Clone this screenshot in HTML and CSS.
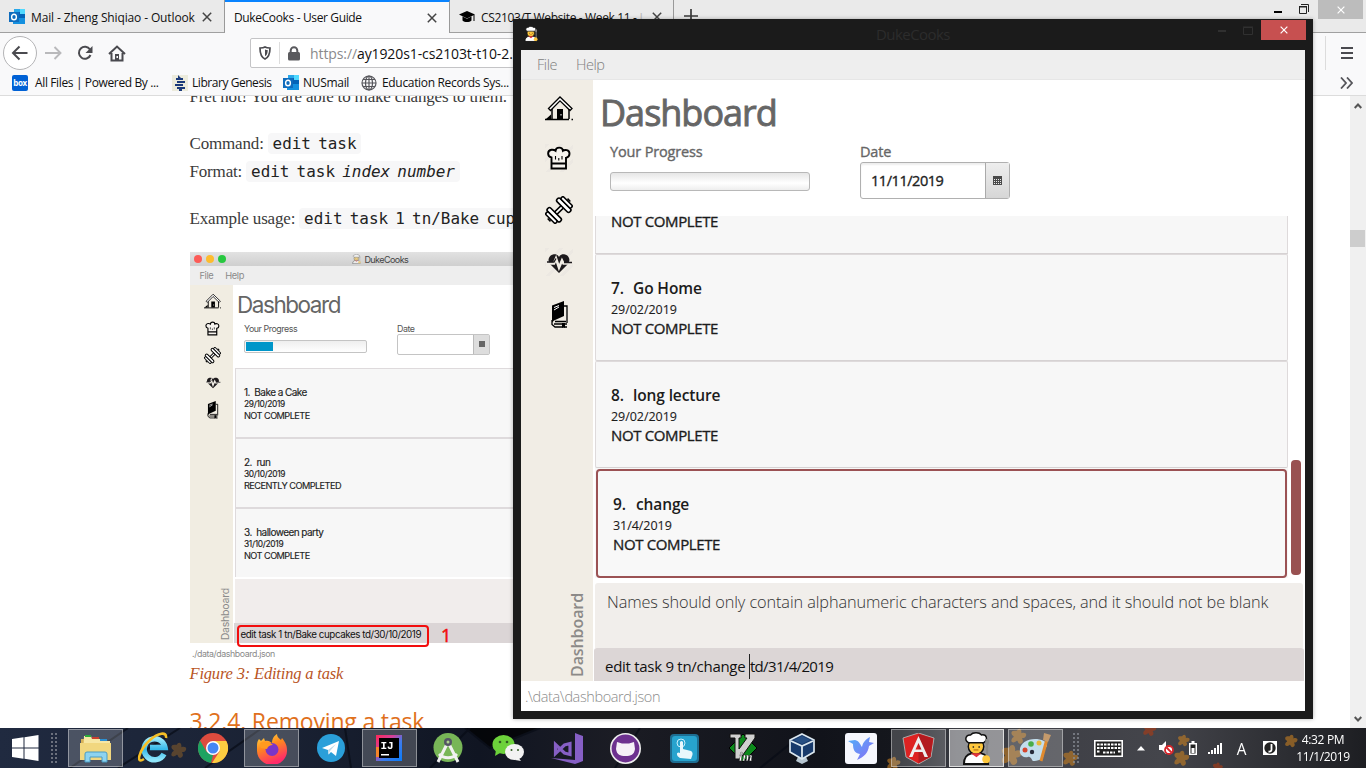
FILE: index.html
```html
<!DOCTYPE html>
<html lang="en">
<head>
<meta charset="utf-8">
<title>DukeCooks - User Guide</title>
<link rel="stylesheet" href="styles.css">
</head>
<body>
<svg class="defs" width="0" height="0">
  <defs>
    <linearGradient id="gCyan" x1="0" y1="0" x2="0" y2="1"><stop offset="0" stop-color="#9be9fb"/><stop offset=".5" stop-color="#35b8ea"/><stop offset="1" stop-color="#8fe6fb"/></linearGradient>
    <linearGradient id="gFox" x1="0" y1="0" x2=".4" y2="1"><stop offset="0" stop-color="#ffe14a"/><stop offset=".45" stop-color="#ff8a1e"/><stop offset="1" stop-color="#ff2a6a"/></linearGradient>
    <linearGradient id="gBird" x1="0" y1="0" x2="1" y2="1"><stop offset="0" stop-color="#4fb0f8"/><stop offset="1" stop-color="#8a6bf5"/></linearGradient>
    <linearGradient id="gIj" x1="0" y1="0" x2="1" y2="1"><stop offset="0" stop-color="#fe2857"/><stop offset=".35" stop-color="#d4409a"/><stop offset=".6" stop-color="#3f7bea"/><stop offset="1" stop-color="#087cfa"/></linearGradient>
    <symbol id="outlook" viewBox="0 0 16 16"><path fill="#28a8ea" d="M5 0h11v14H5z"/><path fill="#0a5fb4" d="M5 3h6v7H5z"/><path fill="#50d9ff" d="M11 0h5v5h-5z"/><path fill="#0364b8" d="M11 5h5v4h-5z"/><path fill="#1490df" d="M4 9l12 0v6H4z"/><path fill="#0f6cbd" d="M0 3h10v10H0z"/><ellipse cx="5" cy="8" rx="2.4" ry="2.8" fill="none" stroke="#fff" stroke-width="1.4"/></symbol>
    <symbol id="x" viewBox="0 0 10 10"><path d="M.8.8l8.4 8.4M9.2.8L.8 9.2" fill="none" stroke="currentColor" stroke-width="1.5"/></symbol>
    <symbol id="house" viewBox="0 0 28 28"><path d="M3.500 13.500L15 2l12 11.500-2 2L15 5.800 5.500 15.500z" fill="#fff" stroke="#000" stroke-width="1.300"/><path d="M7 14v10M24 14v10M0 24.500h24M26.500 24.500h1.500" stroke="#000" stroke-width="1.500"/><path d="M12 14h6v10h-6zM1 24l5-4.500V24z"/><path d="M15.500 19h1v1.500h-1z" fill="#fff"/></symbol>
    <symbol id="hat" viewBox="0 0 28 28"><path d="M6.500 18.500v-5C2 12.500 2 6.500 6.500 5.800c2-.3 3 .2 4 1C11 2.500 17.500 2.500 18 6.800c1.500-1.200 6.500-1.500 6.500 3 0 2.500-1.500 3.500-3.500 4v10.700H6.500zM6.500 19.500H21" fill="#f6f3ee" stroke="#000" stroke-width="1.900"/><path d="M10.500 12v3.500M17 12v3.500M13.800 14v2.500" stroke="#000" stroke-width="1.100"/></symbol>
    <symbol id="dumb" viewBox="0 0 28 28"><g fill="#fff" stroke="#000" stroke-width="1.600" transform="rotate(-45 14 14)"><path d="M9 12.300h10v3.400H9z"/><rect x="5" y="5" width="4.500" height="18" rx="2"/><rect x="18.500" y="5" width="4.500" height="18" rx="2"/><rect x="1.500" y="7" width="3.500" height="14" rx="1.500"/><rect x="23" y="7" width="3.500" height="14" rx="1.500"/><path d="M0 12v4M28 12v4"/></g></symbol>
    <symbol id="heart" viewBox="0 0 28 28"><path fill="#1d1a1c" d="M14 25L5 16C2 12 4 7.500 8 6.500c3-.5 5 .5 6 2.500 1-2 3-3 6-2.500 4 1 6 5.500 3 9.500z"/><path fill="none" stroke="#f1ede5" stroke-width="2.600" d="M1 15.500h8l2-5 3 9 3-7 1.500 3H27"/><path fill="none" stroke="#1d1a1c" stroke-width="1.300" d="M2 14h7l2-3.500M19 14.500h8"/></symbol>
    <symbol id="book" viewBox="0 0 20 28"><path d="M3 5.500L15 1v15L5 20.500l-2 2z" fill="#000"/><path d="M15 6h3v17M3 20v4.500L6 27h12M6 21.500h11M5 24h13" fill="none" stroke="#000" stroke-width="1.300"/><path d="M5 7.500l5-2M5 10l5-3" stroke="#fff" stroke-width="1"/><path d="M13 23h3v5l-1.500-1.300L13 28z"/></symbol>
    <symbol id="chef" viewBox="0 0 30 34"><path d="M2 33c0-7 3-10 8-11h10c5 1 7 4 7 11z" fill="#fff" stroke="#111" stroke-width="2"/><circle cx="14.500" cy="15" r="8" fill="#ffc83d" stroke="#111" stroke-width="1.500"/><path d="M6.500 11C2 8 4 2.500 9 3c2-3 9-3 11 0 6-1 7 5 2.500 8z" fill="#fff" stroke="#111" stroke-width="1.500"/><path d="M9 22h11l-5 4z" fill="#e3343c"/><path d="M11 15.500h1.500M17 15.500h1.500" stroke="#222" stroke-width="1.500"/><path d="M12 18.500h5" stroke="#a65e00"/><path d="M26 10v19" stroke="#888" stroke-width="2"/><ellipse cx="26" cy="10" rx="2" ry="3" fill="#888"/><circle cx="25" cy="28" r="4" fill="#ffc83d"/></symbol>
    <symbol id="leaf" viewBox="0 0 24 24"><path d="M10 2c4-3 6 2 5 5 5-2 8 1 6 4-1 3-5 2-5 3 3 4 0 7-3 7-3-1-2-4-4-4-4 4-8 2-7-1 0-3 3-3 3-5-4-2-4-6-1-7 4-1 5 1 6-2z"/></symbol>
  </defs>
</svg>

<main class="browser">
  <header class="tabs">
    <div class="tab tab-a"><svg width="16" height="16"><use href="#outlook"/></svg><span class="tab-t1">Mail - Zheng Shiqiao - Outlook</span><svg class="tab-x" width="10" height="10"><use href="#x"/></svg></div>
    <div class="tab tab-b"><span class="tab-t2">DukeCooks - User Guide</span><svg class="tab-x" width="10" height="10"><use href="#x"/></svg></div>
    <div class="tab tab-c"><svg width="16" height="14" viewBox="0 0 16 14"><path d="M0 4.500L8 1l8 3.500-8 4z"/><path d="M3.500 6.500v4c2 2 7 2 9 0v-4L8 8.800z"/><path d="M15 5v6" stroke="#000"/></svg><span class="tab-t3">CS2103/T Website - Week 11 - <i>L</i></span><svg class="tab-x" width="10" height="10"><use href="#x"/></svg></div>
    <svg class="plus" width="14" height="14" viewBox="0 0 14 14"><path d="M7 0v14M0 7h14" stroke="#3a3a3a" stroke-width="1.700"/></svg>
    <div class="win-btns"><svg width="8" height="14"><path d="M0 9h8v2H0z"/></svg><svg width="10" height="10" viewBox="0 0 10 10"><path d="M.5 3h7v6.500h-7zM0 2.500h8M2 .5h7.500V8" fill="none" stroke="#222"/></svg><span class="dim-close"><svg width="8" height="8" viewBox="0 0 10 10"><use href="#x"/></svg></span></div>
  </header>
  <nav class="nav">
    <span class="back"><svg width="18" height="16" viewBox="0 0 18 16"><path d="M16.500 8H2M8.500 1.500L2 8l6.500 6.500" fill="none" stroke="#4a4a4f" stroke-width="2"/></svg></span>
    <svg class="fwd" width="17" height="14" viewBox="0 0 17 14"><path d="M0 7h15M9.500 1L15.500 7l-6 6" fill="none" stroke="#b9b9bb" stroke-width="1.900"/></svg>
    <svg class="reload" width="16" height="16" viewBox="0 0 16 16"><path d="M13 4.500A6 6 0 1 0 13.500 10" fill="none" stroke="#4a4a4f" stroke-width="2"/><path d="M15.500 1v7h-7z" fill="#4a4a4f"/></svg>
    <svg class="home" width="18" height="17" viewBox="0 0 18 17"><path d="M1 9l8-7.500L17 9M3.500 8v7.500h11V8" fill="none" stroke="#4a4a4f" stroke-width="2"/><path d="M7 9h4v6H7z" fill="#4a4a4f"/><path d="M8.500 11h1.500v2H8.500z" fill="#fff"/></svg>
    <div class="url"><svg width="12" height="14" viewBox="0 0 12 14"><path d="M6 1C4.500 2 2.500 2 1 2c0 5 .5 9 5 11C10.500 11 11 7 11 2 9.500 2 7.500 2 6 1z" fill="none" stroke="#4a4a4f" stroke-width="1.700"/><path d="M6 3.500c1 .5 2 .5 2.700.5 0 3-.5 5-2.700 6.200z" fill="#4a4a4f"/></svg><span class="url-sep"></span><svg width="12" height="15" viewBox="0 0 12 15"><rect y="6" width="12" height="8.500" rx="1.500" fill="#5a5a5e"/><path d="M2.700 7V4.500a3.300 3.300 0 0 1 6.600 0V7" fill="none" stroke="#5a5a5e" stroke-width="2"/></svg><span class="url-t"><i>https://</i>ay1920s1-cs2103t-t10-2.</span></div>
    <span class="nav-sep"></span>
    <svg width="12" height="12"><path d="M0 0h12v2H0zM0 5h12v2H0zM0 10h12v2H0z" fill="#4a4a4f"/></svg>
  </nav>
  <div class="marks">
    <span class="box">box</span><span class="bm b1">All Files | Powered By ...</span>
    <svg class="lg" width="16" height="16"><path fill="#ecebdc" d="M0 0h16v16H0z"/><path fill="#1b3a7a" d="M6 0l3 3-3 0zM4 3h7v2H4zM5 6h8v2H5zM3 9h8v2H3zM5 12h8v2H5zM7 14h3v2H7z"/></svg><span class="bm b2">Library Genesis</span>
    <svg width="16" height="16"><use href="#outlook"/></svg><span class="bm b3">NUSmail</span>
    <svg width="16" height="16" viewBox="0 0 16 16"><g fill="none" stroke="#55555a" stroke-width="1.200"><circle cx="8" cy="8" r="7"/><ellipse cx="8" cy="8" rx="3.500" ry="7"/><path d="M1 8h14M2 4.500h12M2 11.500h12M8 1v14"/></g></svg><span class="bm b4">Education Records Sys...</span>
    <svg class="more" width="13" height="12" viewBox="0 0 13 12"><path d="M1 .5L6 6l-5 5.500M7 .5L12 6l-5 5.500" fill="none" stroke="#55555a" stroke-width="1.800"/></svg>
  </div>
  <div class="view">
    <article class="doc">
      <p>Fret not! You are able to make changes to them.</p>
      <p>Command: <code>edit task</code><br>Format: <code>edit task <em>index number</em></code></p>
      <p>Example usage: <code>edit task 1 tn/Bake cupcakes</code></p>
      <figure class="shot">
        <div class="mac"><i class="r"></i><i class="y"></i><i class="g"></i><svg width="9" height="10"><use href="#chef"/></svg><span>DukeCooks</span></div>
        <div class="mac-menu"><span>File</span><span>Help</span></div>
        <div class="mac-body">
          <div class="mac-side"><svg width="17" height="17"><use href="#house"/></svg><svg width="17" height="17"><use href="#hat"/></svg><svg width="17" height="17"><use href="#dumb"/></svg><svg width="16" height="16"><use href="#heart"/></svg><svg width="13" height="19"><use href="#book"/></svg><b>Dashboard</b></div>
          <div class="mac-main">
            <h3>Dashboard</h3>
            <div class="mac-row"><div class="mac-prog">Your Progress<span><i></i></span></div><div class="mac-date">Date<span><i></i></span></div></div>
            <ul class="mac-list">
              <li><b>1.&nbsp; Bake a Cake</b><small>29/10/2019</small><span>NOT COMPLETE</span></li>
              <li><b>2.&nbsp; run</b><small>30/10/2019</small><span>RECENTLY COMPLETED</span></li>
              <li><b>3.&nbsp; halloween party</b><small>31/10/2019</small><span>NOT COMPLETE</span></li>
            </ul>
            <div class="mac-out"></div>
            <div class="mac-cmd"><span>edit task 1 tn/Bake cupcakes td/30/10/2019</span><b>1</b></div>
          </div>
        </div>
        <div class="mac-foot">./data/dashboard.json</div>
        <figcaption>Figure 3: Editing a task</figcaption>
      </figure>
      <h2>3.2.4. Removing a task</h2>
    </article>
    <div class="scroll"><svg width="8" height="6" viewBox="0 0 8 6"><path d="M.7 5L4 1.500 7.300 5" fill="none" stroke="#555" stroke-width="2"/></svg><i></i><svg class="dn" width="8" height="6" viewBox="0 0 8 6"><path d="M.7 1L4 4.500 7.300 1" fill="none" stroke="#555" stroke-width="2"/></svg></div>
  </div>
</main>

<section class="app">
  <header class="app-title"><svg width="14" height="16"><use href="#chef"/></svg><span>DukeCooks</span><div class="app-btns"><svg width="8" height="10"><path d="M0 5h8v2H0z" fill="#303030"/></svg><svg width="10" height="9"><path d="M.5 1.500h9v7h-9zM0 1h10" fill="none" stroke="#303030"/></svg><b><svg width="8" height="8"><use href="#x"/></svg></b></div></header>
  <div class="app-menu"><span>File</span><span>Help</span></div>
  <div class="app-body">
    <aside class="side"><svg class="first" width="28" height="28"><use href="#house"/></svg><svg class="hatch" width="28" height="28"><use href="#hat"/></svg><svg width="28" height="28"><use href="#dumb"/></svg><svg class="hatch" width="28" height="28"><use href="#heart"/></svg><svg width="20" height="28"><use href="#book"/></svg><b>Dashboard</b></aside>
    <div class="pane">
      <h1>Dashboard</h1>
      <div class="fields">
        <div class="prog"><label>Your Progress</label><span></span></div>
        <div class="date"><label>Date</label><div><span>11/11/2019</span><i><svg width="9" height="9"><path d="M0 0h9v9H0z" fill="#4a4a4a"/><path d="M1 3.500h7M1 5.500h7M1 7.500h7" stroke="#e8e8e8" stroke-dasharray="1 1"/></svg></i></div></div>
      </div>
      <div class="list">
        <ul class="cards">
          <li class="cut"><span>NOT COMPLETE</span></li>
          <li><b><u>7.</u><em>Go Home</em></b><small>29/02/2019</small><span>NOT COMPLETE</span></li>
          <li><b><u>8.</u><em>long lecture</em></b><small>29/02/2019</small><span>NOT COMPLETE</span></li>
          <li class="sel"><b><u>9.</u><em>change</em></b><small>31/4/2019</small><span>NOT COMPLETE</span></li>
        </ul>
        <div class="thumb"></div>
      </div>
      <div class="out">Names should only contain alphanumeric characters and spaces, and it should not be blank</div>
      <div class="cmd"><span>edit task 9 tn/change</span><i></i><span class="rest">td/31/4/2019</span></div>
    </div>
  </div>
  <footer class="app-foot">.\data\dashboard.json</footer>
</section>

<footer class="bar">
  <svg class="wall" width="1366" height="40" viewBox="0 0 1366 40">
    <g stroke="#080c16" stroke-width="2" opacity=".7"><path d="M70 40L128 0M118 40L180 0M205 40L262 0M345 0l6 40M430 40l40-40M465 0l25 20 50-20M640 0l-25 40M760 40l50-40"/></g>
    <g fill="#c77f22" opacity=".6"><use href="#leaf" x="170" y="14" width="18" height="18" opacity=".6"/><use href="#leaf" x="1000" y="16" width="24" height="24"/><use href="#leaf" x="1010" y="0" width="18" height="18"/><use href="#leaf" x="884" y="28" width="20" height="16"/><use href="#leaf" x="1062" y="22" width="18" height="18"/><use href="#leaf" x="1170" y="22" width="24" height="18"/><use href="#leaf" x="1177" y="6" width="14" height="14"/><use href="#leaf" x="1284" y="6" width="15" height="15"/></g>
    <g fill="#a63c18" opacity=".65"><use href="#leaf" x="1142" y="-6" width="16" height="16"/><use href="#leaf" x="1210" y="34" width="16" height="12"/></g>
  </svg>
  <div class="start"><svg width="27" height="26" viewBox="0 0 27 26" fill="#fff"><path d="M0 4l11.500-1.700v10.200H0zM12.500 2.200L26.500 0v12.500h-14zM0 13.500h11.500v10.300L0 22zM12.500 13.500h14V26l-14-2.200z"/></svg></div>
  <i class="grip"></i>
  <div class="tasks">
    <span class="on"><svg width="32" height="29" viewBox="0 0 32 29"><path d="M1 5h10l2 3h17v18H1z" fill="#d7b257"/><path d="M4 2h7l1 3h8l1 2h9v16H3z" fill="#f7e7a4"/><path d="M5 1h6v2H5z" fill="#2caa3c"/><path d="M12 3h7v2h-7z" fill="#c9402e"/><path d="M20 5h7v2h-7z" fill="#2e8fd0"/><path d="M0 9h31v17H0z" fill="#f1d77f"/><path d="M5 28V20q0-2 2-2h18q2 0 2 2v8h-5v-5H10v5z" fill="#8dd3f0" stroke="#4b9cc4"/></svg></span>
    <span><svg width="32" height="32" viewBox="0 0 32 32"><path d="M26 22a10.500 10.500 0 1 1 1-6.500H12" fill="none" stroke="url(#gCyan)" stroke-width="5.500"/><path d="M6 27C-3 33 1 18 12 8 20 1 29-1 28 6" fill="none" stroke="#f6bf26" stroke-width="2.600"/></svg></span>
    <span><svg width="30" height="30" viewBox="0 0 30 30"><circle cx="15" cy="15" r="15" fill="#dd4b3e"/><path d="M2 7.500L8.500 18.700 15 22l-2 8A15 15 0 0 1 2 7.500z" fill="#1da362"/><path d="M15 8h13.300A15 15 0 0 1 14 30l7.500-11.500z" fill="#fccd41"/><circle cx="15" cy="15" r="7" fill="#fff"/><circle cx="15" cy="15" r="5.500" fill="#4587f3"/></svg></span>
    <span class="on"><svg width="31" height="31" viewBox="0 0 31 31"><path d="M1 13C1 8 3 6 3 6l2 2 3-3 1 3c4-1 5 1 7 2 0-5 3-8 5-9 0 3 2 4 4 6l1-2c4 5 5 8 5 12A15 14.500 0 0 1 1 18z" fill="url(#gFox)"/><circle cx="16" cy="16.500" r="6.500" fill="#7a35c8"/><path d="M4 10c5-3 9-1 13 2-3 0-5 1-6 4l-6-1z" fill="#ff9a1f"/></svg></span>
    <span><svg width="28" height="28" viewBox="0 0 28 28"><circle cx="14" cy="14" r="14" fill="#2a9fd9"/><path d="M5 14L22 7l-3 15-5-4-2.500 2.500L11 16z" fill="#fff"/><path d="M11 16l8-6-6 7-1.500 3.500z" fill="#bcd9ea"/></svg></span>
    <span class="on"><svg width="26" height="26" viewBox="0 0 26 26"><path d="M0 0h26v26H0z" fill="url(#gIj)"/><path d="M0 12h5v10H0z" fill="#f58529"/><path d="M3 3h20v20H3z"/><text x="4.500" y="14" class="ij">IJ</text><path d="M5 19h8v1.500H5z" fill="#fff"/></svg></span>
    <span><svg width="30" height="30" viewBox="0 0 30 30"><circle cx="15" cy="14.500" r="14.500" fill="#78b657"/><path d="M14 11L5 29M16 11l9 18M6 21c5 5 13 5 18 0" fill="none" stroke="#f1f1f1" stroke-width="3"/><circle cx="15" cy="9" r="4" fill="#556"/><circle cx="15" cy="9" r="1.500" fill="#aed28f"/></svg></span>
    <span><svg width="32" height="26" viewBox="0 0 32 26"><ellipse cx="11.500" cy="9.500" rx="11" ry="9.500" fill="#6dd23b"/><path d="M4 15l-1 6 5-3z" fill="#6dd23b"/><ellipse cx="22.500" cy="17" rx="9.500" ry="8" fill="#f2f2f2"/><path d="M26 22l3 4-6-1z" fill="#f2f2f2"/><g fill="#315b22"><circle cx="8" cy="7" r="1.300"/><circle cx="15" cy="7" r="1.300"/><circle cx="19.500" cy="15" r="1"/><circle cx="26" cy="15" r="1"/></g></svg></span>
    <span><svg width="32" height="31" viewBox="0 0 32 31"><path d="M24 0l8 3v25l-8 3-24-6 24 2z" fill="#865fc5"/><path d="M4.500 11.500v9l9-8.500 5.500-1.500v11l-5.500-1.500-9-8.500z" fill="none" stroke="#865fc5" stroke-width="3.200"/></svg></span>
    <span><svg width="31" height="31" viewBox="0 0 31 31"><circle cx="15.500" cy="15.500" r="14.700" fill="#6d318f" stroke="#eee" stroke-width="1.600"/><path d="M7 9l5 1.500h7L24 9l1 7c-1 6-4 7-9.500 7S7 22 6 16z" fill="#f5f0f7"/></svg></span>
    <span><svg width="29" height="29" viewBox="0 0 29 29"><rect width="29" height="29" rx="4" fill="#1e6e92"/><rect x="2" y="2" width="25" height="25" rx="3" fill="#27a3ce"/><circle cx="11" cy="9" r="4" fill="none" stroke="#c9effb"/><path d="M10 24c-5-3-3-7 0-5V8q1.500-2 3 0v7l8 2c3 2 1 5 0 8z" fill="#e9f7fc"/></svg></span>
    <span><svg width="30" height="30" viewBox="0 0 30 30"><path d="M15 1l14 14-14 14L1 15z" fill="#0c8a1c" stroke="#000"/><path d="M2 1h11v4h-2v11L19 5h-2V1h10v4L12 26H7V5H2z" fill="#d0d0d0" stroke="#111"/><text x="11" y="28" class="vim">im</text></svg></span>
    <span class="vb"><svg width="26" height="31" viewBox="0 0 26 31"><path d="M10 22h6l3 6-6 3-6-3z" fill="#b8c7d2"/><path d="M13 1l12 6v12l-12 7L1 19V7z" fill="#183a6b" stroke="#dbe7ef" stroke-width="1.700"/><path d="M2 8l11 5 11-5M13 13v12" fill="none" stroke="#dbe7ef" stroke-width="1.800"/><path d="M13 3l8 4-8 4-8-4z" fill="#274f83"/></svg></span>
    <span><svg width="32" height="31" viewBox="0 0 32 31"><rect width="32" height="31" rx="3" fill="#f6f7fd"/><path d="M3 8l7-1c4 1 5 4 7 7 1-5 4-8 8-10l-1 5 5 1-5 3c-1 7-5 11-12 14l3-6c-6-1-7-5-7-10z" fill="url(#gBird)"/></svg></span>
    <span class="on"><svg width="33" height="31" viewBox="0 0 33 31"><path d="M16.500 0L32 5l-3 19-12.500 7L4 24 1 5z" fill="#d22" stroke="#aaa"/><path d="M16.500 1L31 5.500 28.500 24l-12 6z" fill="#b31a1f"/><path d="M16.500 3L26 24h-3.500l-2-5h-8l-2 5H7zM16.500 10l-3 6.500h6z" fill="#eee" fill-rule="evenodd"/></svg></span>
    <span class="on act"><svg width="29" height="33"><use href="#chef"/></svg></span>
    <span class="on"><svg width="33" height="32" viewBox="0 0 33 32"><path d="M1 21C-1 9 14 4 25 9c7 5-1 7 0 12 0 7-7 8-11 8-1 0-2-5-5-4-4 1-7-1-8-4z" fill="#c2ddec"/><circle cx="6" cy="18" r="2.500" fill="#d5462e"/><circle cx="12" cy="12" r="2.800" fill="#49ad49"/><circle cx="20" cy="11" r="2.500" fill="#e7b93a"/><circle cx="13" cy="20" r="2.200" fill="#252c3a"/><path d="M28 7l-6 22" stroke="#e08a2e" stroke-width="3"/><path d="M25 1l7 2-3 7-5-2z" fill="#c49a6c"/></svg></span>
  </div>
  <i class="grip g2"></i>
  <div class="tray">
    <svg width="29" height="17" viewBox="0 0 29 17"><path d="M.8.800h27.400v15.400H.8z" fill="#222" stroke="#fff" stroke-width="1.600"/><path d="M3 4.500h24M3 8h24M3 11.500h3M9 12.500h12M24 11.500h3" stroke="#fff" stroke-width="2.200" stroke-dasharray="2.500 1"/></svg>
    <svg class="up" width="8" height="5"><path d="M4 0l4 4.500H0z" fill="#fff"/></svg>
    <svg class="spk" width="15" height="14" viewBox="0 0 15 14"><path d="M0 4h3l4-4v13L3 9H0z" fill="#fff"/><circle cx="10" cy="9" r="4" fill="#fff" stroke="#d7262b" stroke-width="1.800"/><path d="M7.500 6.500l5 5" stroke="#d7262b" stroke-width="1.800"/></svg>
    <svg class="bat" width="8" height="14"><path d="M.75 2.750h6.500v10.500H.75z" fill="#222" stroke="#fff" stroke-width="1.500"/><path d="M2.500 0h3v2h-3zM2.500 7h3v5h-3z" fill="#fff"/></svg>
    <svg class="sig" width="14" height="11"><path d="M0 9h2v2H0zM3 7h2v4H3zM6 5h2v6H6zM9 2h2v9H9zM12 0h2v11h-2z" fill="#fff"/></svg>
    <span class="ime">A</span>
    <svg class="jj" width="14" height="14" viewBox="0 0 14 14"><path d="M0 0h14v14H0z" fill="#fff"/><circle cx="7" cy="7" r="5.700" fill="#222"/><path d="M8.500 3v6q-.5 2-3 1.500" fill="none" stroke="#fff" stroke-width="1.800"/></svg>
    <div class="clock"><span>4:32 PM</span><span>11/1/2019</span></div>
  </div>
</footer>
</body>
</html>
```
FILE: styles.css
```css
* { box-sizing: border-box; }
body { margin: 0; width: 1366px; height: 768px; overflow: hidden; position: relative; display: flex; flex-direction: column; font-family: "Open Sans", "Noto Sans", sans-serif; white-space: nowrap; }
svg { display: block; flex: none; }
i, em { font-style: normal; }
ul, h1, h2, h3, p, figure { margin: 0; padding: 0; list-style: none; }
.defs { position: absolute; }

/* browser */
.browser { height: 728px; display: flex; flex-direction: column; background: #fff; }
.tabs { height: 33px; background: #eaeaea; display: flex; border-bottom: 1px solid #a0a0a0; font-size: 12px; color: #111; }
.tab { height: 33px; display: flex; align-items: center; padding-top: 2px; border-right: 1px solid #999; color: #111; overflow: hidden; }
.tab-x { margin-left: auto; color: #444; }
.tab-a { width: 225px; padding-left: 9px; padding-right: 12px; border-bottom: 1px solid #a0a0a0; gap: 6px; }
.tab-b { width: 225px; background: #f9f9fa; border-top: 2px solid #0a84ff; padding: 0 12px 0 9px; }
.tab-c { width: 224px; border-bottom: 1px solid #a0a0a0; padding: 2px 11px 0 9px; gap: 6px; }
.tab-c i { color: #bbb; }
.tab-t1 { letter-spacing: -.13px; }
.tab-t2 { letter-spacing: -.36px; }
.tab-t3 { letter-spacing: -.35px; }
.plus { margin: 9px 0 0 10px; }
.win-btns { margin-left: auto; display: flex; gap: 17px; height: 19px; padding-right: 3px; }
.win-btns svg:nth-child(2) { margin-top: 4px; }
.win-btns > svg:first-child { margin-top: 2px; }
.dim-close { width: 45px; height: 19px; background: #bcbcbc; color: #fff; display: flex; align-items: center; justify-content: center; margin-left: -8px; }
.nav { height: 40px; background: #f9f9fa; display: flex; align-items: center; padding: 0 13px 0 3px; }
.back { width: 34px; height: 34px; border: 1px solid #b4b4b6; border-radius: 50%; background: #fff; display: flex; align-items: center; justify-content: center; }
.fwd { margin-left: 8px; }
.reload { margin-left: 15px; }
.home { margin-left: 15px; }
.url { margin-left: 124px; width: 1000px; height: 30px; border: 1px solid #c4c4c6; border-radius: 2px; background: #fff; display: flex; align-items: center; padding-left: 8px; overflow: hidden; }
.url-sep { width: 1px; height: 22px; background: #ddd; margin: 0 8px 0 8px; }
.url-t { font-size: 14px; margin-left: 10px; letter-spacing: -.1px; color: #111; }
.url-t i { color: #8a8a8c; }
.nav-sep { width: 1px; height: 34px; background: #dcdcdc; margin-left: auto; margin-right: 15px; }
.marks { height: 23px; background: #f9f9fa; border-bottom: 1px solid #dcdcdc; display: flex; align-items: center; padding: 0 13px 2px 12px; font-size: 12px; color: #111; }
.box { width: 16px; height: 16px; border-radius: 2px; background: #0061d5; color: #fff; font: bold 8px/15px "Open Sans", sans-serif; text-align: center; letter-spacing: -.4px; }
.bm { margin-left: 7px; line-height: 16px; }
.b1 { width: 123px; letter-spacing: -.37px; }
.lg { margin-left: 14px; }
.bm.b2 { width: 79px; letter-spacing: -.45px; margin: 0 12px 0 4px; }
.bm.b3 { width: 46px; margin: 0 12px 0 4px; letter-spacing: -.3px; }
.bm.b4 { margin-left: 5px; letter-spacing: -.33px; }
.more { margin-left: auto; }
.view { flex: 1; min-height: 0; display: flex; overflow: hidden; }
.scroll { width: 16px; background: #f0f0f0; display: flex; flex-direction: column; align-items: center; padding: 7px 1px 6px 0; margin-left: auto; }
.scroll i { width: 15px; height: 17px; background: #cdcdcd; margin-top: 121px; }
.scroll .dn { margin-top: auto; }

/* guide page */
.doc { width: 513px; flex: none; overflow: hidden; padding-left: 189.5px; color: #3b3b3b; font-family: "Liberation Serif", serif; }
.doc p { font-size: 17px; line-height: 28px; letter-spacing: -.17px; margin-bottom: 19px; }
.doc p:first-child { margin-top: -13px; }
.doc code { font: 15.94px/1.3 "DejaVu Sans Mono", monospace; letter-spacing: 0; word-spacing: -2.4px; background: #f7f7f8; border-radius: 4px; padding: 1px 4.8px; color: #222; }
.doc code em { font-style: italic; }
.doc h2 { font: 400 23px/32px "Open Sans", sans-serif; color: #e0701c; letter-spacing: -.17px; margin-top: 19px; }
.shot { width: 560px; font-family: Inter, sans-serif; font-size: 9px; color: #333; margin: 1px 0 0 .5px; padding-top: 0; }
.mac { height: 14px; background: linear-gradient(#e2e2e2, #cfcfcf); display: flex; align-items: center; padding-left: 3.5px; color: #444; font-size: 9px; }
.mac span { letter-spacing: -.55px; }
.mac > i { width: 8px; height: 8px; border-radius: 50%; margin-right: 4.300px; }
.r { background: #fc5b57; } .y { background: #fdbc2e; } .g { background: #28c840; }
.mac svg { margin: 0 3px 0 122px; opacity: .55; }
.mac-menu { height: 19px; background: #eee; color: #8a8a8a; display: flex; gap: 12px; align-items: center; padding-left: 9.5px; font-size: 9.300px; letter-spacing: -.4px; }
.mac-body { height: 358px; display: flex; }
.mac-side { width: 43px; background: #f1ede2; display: flex; flex-direction: column; align-items: center; padding: 8px 0 3px 2px; gap: 10px; }
.mac-side b { writing-mode: vertical-rl; transform: rotate(180deg); font-weight: 400; font-size: 10.500px; line-height: 12px; color: #8a8a8a; margin: auto 0 0 26px; letter-spacing: -.2px; }
.mac-main { flex: 1; background: #fff; padding-left: 2px; }
.mac-main h3 { font-weight: 400; font-size: 22.500px; line-height: 38px; letter-spacing: -1.450px; color: #666; padding: 1px 0 0 2px; height: 38px; }
.mac-row { display: flex; height: 45px; padding-left: 9px; letter-spacing: -.45px; color: #555; font-size: 8.900px; line-height: 11px; }
.mac-prog { width: 153px; }
.mac-prog span { display: block; width: 123px; height: 13px; margin-top: 6px; border: 1px solid #c4c4c4; border-radius: 2px; padding: 1px; background: linear-gradient(#eee, #fff); }
.mac-prog i { display: block; width: 27px; height: 9px; background: #0096c9; }
.mac-date span { display: flex; justify-content: flex-end; width: 93px; height: 21px; border: 1px solid #c4c4c4; border-radius: 2px; }
.mac-date i { width: 16px; border-left: 1px solid #bbb; background: linear-gradient(#666, #666) 5px 6px / 6px 6px no-repeat, #ddd; }
.mac-list { height: 209px; }
.mac-list li { height: 70px; background: #f7f7f7; border: 1px solid #dedadc; border-width: 1px 0 1px 1px; padding: 17px 0 0 8px; display: flex; flex-direction: column; color: #222; line-height: 12px; letter-spacing: -.55px; font-size: 9.200px; -webkit-text-stroke: .15px; }
.mac-list li:last-child { border-bottom: 0; height: 69px; }
.mac-list b { font-weight: 400; font-size: 10px; line-height: 13px; letter-spacing: -.55px; }
.mac-list small { font-size: 8.400px; line-height: 11px; letter-spacing: -.3px; }
.mac-out { height: 44px; margin-top: 2px; background: #f1edec; }
.mac-cmd { height: 20px; background: #dbd5d6; display: flex; align-items: center; gap: 13px; margin-left: -1px; padding-left: 3px; }
.mac-cmd span { flex: none; width: 192px; height: 22px; border: 2px solid #f20d0d; border-radius: 4px; color: #111; line-height: 15px; padding-left: 1.5px; font-size: 9.800px; letter-spacing: -.43px; margin-top: 5px; }
.mac-cmd b { color: #f20d0d; font: 18px/20px "Open Sans", sans-serif; margin: 3px 0 0 -1px; -webkit-text-stroke: .5px; }
.mac-foot { height: 18px; line-height: 22px; padding-left: 2px; color: #8a8a8a; font-size: 8.800px; letter-spacing: -.4px; }
.shot figcaption { font: italic 16.500px/25px "Liberation Serif", serif; color: #b9551f; letter-spacing: -.18px; margin-left: -.5px; }

/* DukeCooks window */
.app { position: absolute; left: 513px; top: 19px; width: 800px; height: 700px; background: #1b1b1b; padding: 0 8px 8px; display: flex; flex-direction: column; box-shadow: 0 0 4px rgba(0,0,0,.3); }
.app-title { height: 31px; flex: none; display: flex; align-items: flex-start; padding: 8px 0 0 3px; }
.app-title > svg { margin-top: -1px; }
.app-title span { margin-left: 338px; color: #2c2c2c; font-size: 15px; line-height: 15px; letter-spacing: -.55px; }
.app-btns { margin: -7px -1px 0 auto; display: flex; align-items: center; gap: 17px; }
.app-btns b { width: 45px; height: 20px; background: #c75050; color: #fff; display: flex; align-items: center; justify-content: center; margin-left: -9px; }
.app-menu { height: 30px; flex: none; background: #eee; border-bottom: 1px solid #e6e6e6; display: flex; align-items: center; gap: 19px; padding-left: 16px; color: #808080; font-size: 14.500px; font-weight: 300; letter-spacing: -.45px; }
.app-body { height: 601px; flex: none; display: flex; background: #fff; }
.side { width: 72px; background: #f1ede5; display: flex; flex-direction: column; align-items: center; padding: 14px 0 4px 4px; gap: 24px; }
.side .first { margin: 1px 0 -3px; }
.hatch { background: repeating-linear-gradient(135deg, #ece8e2 0 3px, #f1ede5 3px 10px); }
.side b { writing-mode: vertical-rl; transform: rotate(180deg); font-weight: 600; font-size: 16px; line-height: 20px; color: #8c8a88; margin: auto 0 0 36px; letter-spacing: -.1px; }
.pane { flex: 1; min-width: 0; display: flex; flex-direction: column; }
.pane h1 { font-size: 36px; font-weight: 400; -webkit-text-stroke: .9px; line-height: 62px; height: 60px; padding-left: 7px; letter-spacing: -1px; color: #666; padding-top: 2px; }
.fields { height: 76px; display: flex; padding-left: 17px; color: #666; font-weight: 400; -webkit-text-stroke: .35px; font-size: 14.5px; }
.fields label { display: block; line-height: 24px; height: 22px; letter-spacing: -.15px; }
.prog { width: 250px; }
.prog span { display: block; width: 200px; height: 19px; margin-top: 10px; border: 1px solid #b8b8b8; border-radius: 3px; background: linear-gradient(#e6e6e6, #fff 60%, #eee); }
.date > div { width: 150px; height: 37px; border: 1px solid #b0b0b0; border-radius: 3px; display: flex; justify-content: space-between; box-shadow: inset 0 2px 2px #eee; }
.date span { padding-left: 10px; line-height: 35px; color: #222; letter-spacing: -.45px; }
.date i { width: 24px; border-left: 1px solid #aaa; background: linear-gradient(#eee, #d6d6d6); display: flex; align-items: center; justify-content: center; }
.list { height: 362px; display: flex; padding-left: 2px; }
.cards { width: 693px; overflow: hidden; color: #1c1c1c; font-weight: 400; -webkit-text-stroke: .35px; font-size: 15px; letter-spacing: -.37px; background: #f7f7f7; }
.cards li { height: 107px; border: 1px solid #dedadb; padding: 22px 0 0 15px; display: flex; flex-direction: column; line-height: 18px; border-radius: 2px; border-bottom: 1px solid #d6d2d3; }
.cards .cut { height: 38px; padding-top: 0; border-top: 0; border-radius: 0; }
.cards .cut span { margin-top: -4px; }
.cards b { font-weight: 600; -webkit-text-stroke: 0; font-size: 15.5px; line-height: 23px; display: flex; letter-spacing: -.12px; }
.cards u { text-decoration: none; width: 22px; }
.cards small { font-size: 12.500px; -webkit-text-stroke: .1px; line-height: 19px; letter-spacing: -.05px; }
.cards .sel { height: 109px; margin: 1px 1px 0; border: 2px solid #9b5254; border-radius: 4px; background: #f8f8f8; }
.cards .sel u { width: 23px; }
.thumb { width: 10px; height: 115px; border-radius: 4px; background: #995151; margin: 244px 0 0 3px; }
.out { height: 65px; margin: 5px 2px 0; background: #f1eeeb; border-radius: 3px 3px 0 0; font-size: 16.3px; font-weight: 300; color: #333; padding: 8px 0 0 12px; line-height: 22px; letter-spacing: -.09px; }
.cmd { height: 33px; margin: 0 1px; background: #dcd6d6; border-radius: 3px 3px 0 0; display: flex; align-items: center; padding: 3px 0 0 11px; font-size: 15px; line-height: 22px; color: #111; letter-spacing: -.28px; }
.cmd .rest { letter-spacing: -.65px; margin-left: -.5px; }
.cmd i { width: 1px; height: 25px; background: #222; margin: 0 0 0 4px; }
.app-foot { height: 30px; background: #fff; color: #8c8c8c; font-size: 14.500px; line-height: 31px; font-weight: 300; padding-left: 4px; letter-spacing: -.4px; }

/* taskbar */
.bar { height: 40px; position: relative; display: flex; align-items: center; background: linear-gradient(90deg, #202a40 0, #1a2234 20%, #101522 35%, #1b1c24 45%, #11131a 60%, #15171d 66%, #3a3b42 70%, #44454b 85%, #2d2e33 94%, #1d1e22 100%); color: #fff; }
.wall { position: absolute; left: 0; top: 0; }
.start, .tasks, .tray, .grip { position: relative; }
.start { width: 50px; padding-left: 12px; flex: none; }
.grip { flex: none; width: 8px; height: 32px; background: radial-gradient(circle, #8b8f98 .8px, transparent 1px) 0 0 / 4px 4px; opacity: .7; }
.tasks { margin-left: 10px; display: flex; width: 995px; flex: none; justify-content: space-between; }
.tasks span { width: 55px; height: 38px; display: flex; align-items: center; justify-content: center; border: 1px solid transparent; }
.tasks .on { background: rgba(255,255,255,.2); border-color: rgba(255,255,255,.4); }
.tasks .act { background: rgba(255,255,255,.45); border-color: #ddd; }
.tasks span:nth-child(n+8):nth-child(-n+14) svg { margin-left: 3px; }
.ij { font: bold 11px "Liberation Mono", monospace; fill: #fff; }
.vim { font: italic bold 13px "Liberation Serif", serif; fill: #fff; stroke: #222; stroke-width: .4px; }
.g2 { margin-left: 9px; }
.tray { display: flex; align-items: center; margin-left: 14px; flex: 1; }
.up { margin-left: 14px; } .spk { margin-left: 14px; } .bat { margin-left: 15px; } .sig { margin-left: 11px; }
.ime { margin-left: 14px; font-size: 17px; width: 14px; transform: scaleX(.9); }
.jj { margin-left: 13px; }
.clock { margin-left: 15px; width: 62px; display: flex; flex-direction: column; align-items: center; font-size: 12px; line-height: 17px; letter-spacing: -.35px; }
```
